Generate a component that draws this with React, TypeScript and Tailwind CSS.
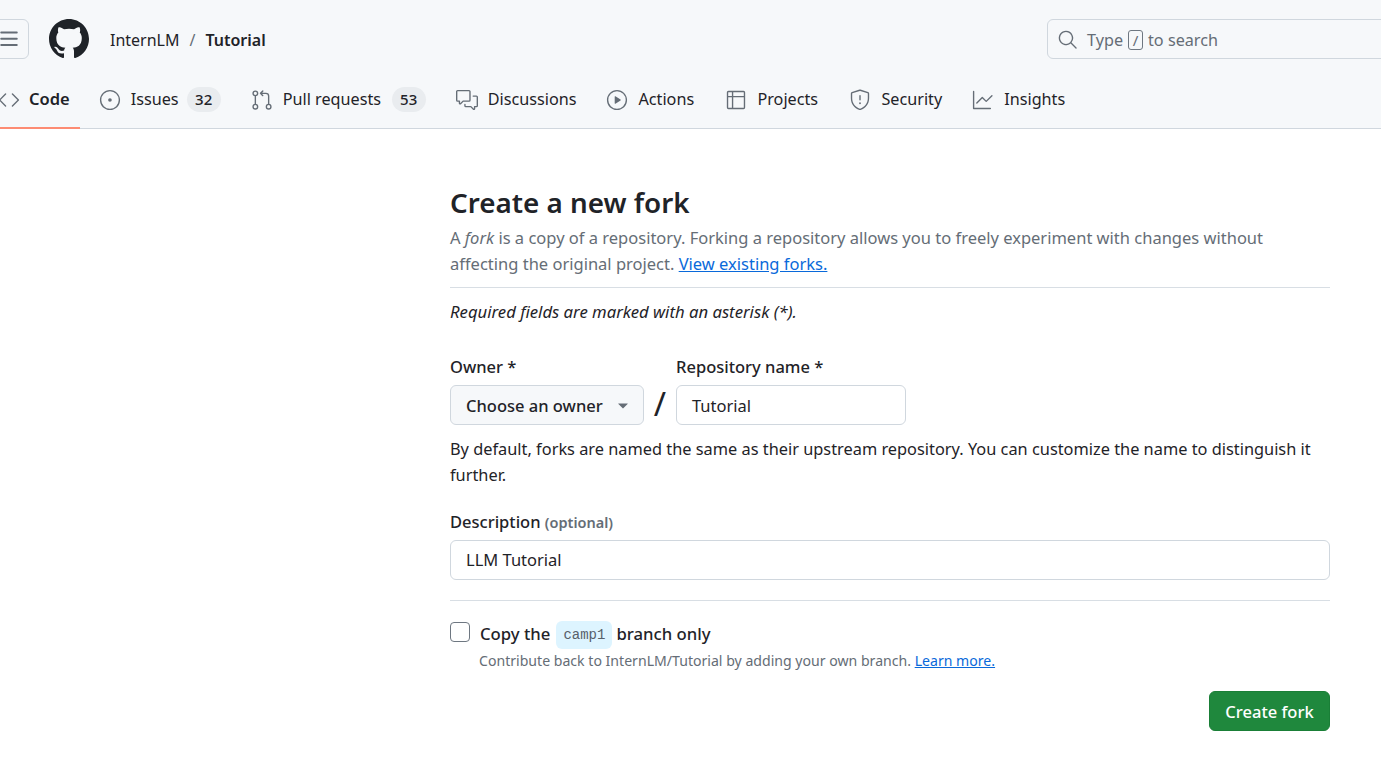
import { GoCode, GoCommentDiscussion, GoGitPullRequest, GoGraph, GoIssueOpened, GoPlay, GoSearch, GoShield, GoTable, GoTriangleDown } from "react-icons/go";
import type { IconType } from "react-icons";

interface TabProps {
  icon: IconType;
  label: string;
  labelWidth?: string;
  count?: string;
  active?: boolean;
}

const tabs: TabProps[] = [
  { icon: GoCode, label: "Code", active: true },
  { icon: GoIssueOpened, label: "Issues", labelWidth: "w-[46px]", count: "32" },
  { icon: GoGitPullRequest, label: "Pull requests", labelWidth: "w-[99px]", count: "53" },
  { icon: GoCommentDiscussion, label: "Discussions" },
  { icon: GoPlay, label: "Actions", labelWidth: "w-[57px]" },
  { icon: GoTable, label: "Projects", labelWidth: "w-[62px]" },
  { icon: GoShield, label: "Security" },
  { icon: GoGraph, label: "Insights" },
];

function Tab({ icon: Icon, label, labelWidth, count, active }: TabProps) {
  return (
    <div className={`h-[49px] flex items-center pl-[10px] pb-[8px] border-b-2 ${active ? "gap-[10px] pr-[10px] text-[16.5px] border-[#fd8c73] font-semibold" : "gap-[11px] pr-[11px] text-[16.2px] border-transparent"}`}>
      <Icon size={22} className="text-[#656d76] shrink-0 -mx-[1px]" />
      <span className={`whitespace-nowrap ${labelWidth ?? ""}`}>{label}</span>
      {count && (
        <span className="h-[25px] w-[34px] -ml-px rounded-full bg-[#e9ecef] flex items-center justify-center text-[15px] font-medium">{count}</span>
      )}
    </div>
  );
}

export default function App() {
  return (
    <div className="w-[1381px] h-[777px] overflow-hidden bg-white text-[#1f2328] font-['Noto_Sans',sans-serif] text-[16.5px]">
      {/* Repo header */}
      <header className="h-[129px] bg-[#f6f8fa] border-b border-[#d0d7de] flex flex-col">
        <div className="h-[80px] flex items-center shrink-0 pb-[2px]">
          <div className="w-[40px] h-[40px] ml-[-11px] rounded-md border border-[#d0d7de] flex items-center justify-center shrink-0">
            <svg width="20" height="20" viewBox="0 0 16 16" fill="#656d76">
              <path d="M1 2.75A.75.75 0 0 1 1.75 2h12.5a.75.75 0 0 1 0 1.5H1.75A.75.75 0 0 1 1 2.75Zm0 5A.75.75 0 0 1 1.75 7h12.5a.75.75 0 0 1 0 1.5H1.75A.75.75 0 0 1 1 7.75ZM1.75 12h12.5a.75.75 0 0 1 0 1.5H1.75a.75.75 0 0 1 0-1.5Z" />
            </svg>
          </div>
          <svg width="40" height="40" viewBox="0 0 16 16" fill="#1f2328" className="ml-[20px] shrink-0">
            <path d="M8 0c4.42 0 8 3.58 8 8a8.013 8.013 0 0 1-5.45 7.59c-.4.08-.55-.17-.55-.38 0-.27.01-1.13.01-2.2 0-.75-.25-1.23-.54-1.48 1.78-.2 3.65-.88 3.65-3.95 0-.88-.31-1.59-.82-2.15.08-.2.36-1.02-.08-2.12 0 0-.67-.22-2.2.82-.64-.18-1.32-.27-2-.27-.68 0-1.36.09-2 .27-1.53-1.03-2.2-.82-2.2-.82-.44 1.1-.16 1.92-.08 2.12-.51.56-.82 1.28-.82 2.15 0 3.06 1.86 3.75 3.64 3.95-.23.2-.44.55-.51 1.07-.46.21-1.61.55-2.33-.66-.15-.24-.6-.83-1.23-.82-.67.01-.27.38.01.53.34.19.73.9.82 1.13.16.45.68 1.31 2.69.94 0 .67.01 1.3.01 1.49 0 .21-.15.45-.55.38A7.995 7.995 0 0 1 0 8c0-4.42 3.58-8 8-8Z" />
          </svg>
          <div className="ml-[21px] w-[937px] pt-[2px] flex items-center gap-[10px] shrink-0 text-[16px]">
            <span>InternLM</span>
            <span className="text-[#656d76]">/</span>
            <span className="font-semibold">Tutorial</span>
          </div>
          <div className="w-[400px] h-[40px] shrink-0 rounded-md border border-[#d0d7de] flex items-center pl-[9px] text-[#656d76] text-[16.2px]">
            <GoSearch size={21} />
            <span className="ml-[9px] pt-[2px]">Type</span>
            <span className="mx-[5px] w-[15px] h-[20px] mt-[2px] rounded-[3px] border border-[#6e7781] text-[15px] flex items-center justify-center">/</span>
            <span className="pt-[2px]">to search</span>
          </div>
        </div>
        <nav className="flex gap-[10px] ml-[-11px]">
          {tabs.map((t) => (
            <Tab key={t.label} {...t} />
          ))}
        </nav>
      </header>

      {/* Fork form */}
      <main className="ml-[450px] w-[880px] pt-[54px]">
        <h1 className="text-[27.8px] leading-[38px] font-semibold">Create a new fork</h1>
        <p className="mt-[4px] leading-[26px] text-[#656d76]">
          A <em>fork</em> is a copy of a repository. Forking a repository allows you to freely experiment with changes without affecting the original project.{" "}
          <a className="text-[#0969da] underline">View existing forks.</a>
        </p>
        <div className="mt-[10px] border-t border-[#d8dee4]" />
        <p className="mt-[11px] leading-[26px] italic text-[16.7px]">Required fields are marked with an asterisk (*).</p>

        <div className="mt-[29px] flex items-start">
          <div className="w-[194px]">
            <div className="leading-[26px] font-medium">Owner *</div>
            <div className="mt-[5px] h-[40px] rounded-md bg-[#f6f8fa] border border-[#d0d7de] flex items-center pl-[15px] pt-[2px] font-medium">
              Choose an owner
              <GoTriangleDown size={18} className="ml-[11px] text-[#656d76]" />
            </div>
          </div>
          <div className="w-[32px] pt-[27px] text-center text-[33px] leading-[46px]">/</div>
          <div className="w-[230px]">
            <div className="leading-[26px] font-medium">Repository name *</div>
            <div className="mt-[5px] h-[40px] rounded-md border border-[#d0d7de] flex items-center pl-[15px] pt-[2px]">Tutorial</div>
          </div>
        </div>

        <p className="mt-[9px] leading-[26px] text-[16.35px]">
          By default, forks are named the same as their upstream repository. You can customize the name to distinguish it further.
        </p>

        <div className="mt-[21px] leading-[26px] font-medium">
          Description <span className="text-[#656d76] text-[14.5px] font-semibold">(optional)</span>
        </div>
        <div className="mt-[5px] h-[40px] rounded-md border border-[#d0d7de] flex items-center pl-[15px]">LLM Tutorial</div>

        <div className="mt-[20px] border-t border-[#d8dee4]" />

        <div className="mt-[20px] flex items-start">
          <div className="w-[20px] h-[20px] mt-[1px] rounded-[4px] border border-[#6e7781] shrink-0" />
          <div className="ml-[9px]">
            <div className="h-[26px] pl-px flex items-center font-medium text-[16.7px]">
              Copy the
              <code className="ml-[6px] mr-[4px] mt-[2px] h-[28px] px-[7px] rounded-md bg-[#ddf4ff] text-[#57606a] font-['Liberation_Mono',monospace] text-[14px] font-normal flex items-center">camp1</code>
              branch only
            </div>
            <div className="mt-[4px] text-[14.1px] leading-[20px] text-[#656d76]">
              Contribute back to InternLM/Tutorial by adding your own branch. <a className="text-[#0969da] underline">Learn more.</a>
            </div>
          </div>
        </div>

        <div className="mt-[20px] flex justify-end">
          <button className="w-[121px] h-[40px] pt-[2px] rounded-md bg-[#1f883d] border border-[#1a7f37] text-white font-medium">Create fork</button>
        </div>
      </main>
    </div>
  );
}
